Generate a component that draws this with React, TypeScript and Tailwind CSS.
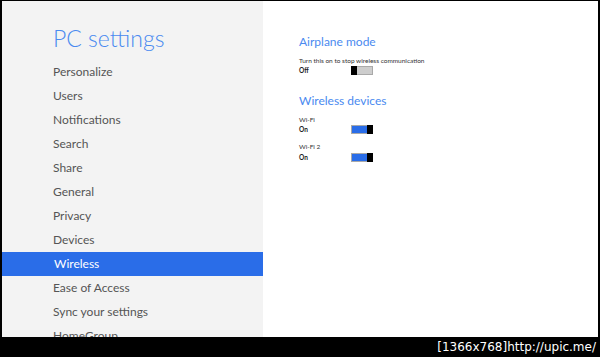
const menu = [
  "Personalize",
  "Users",
  "Notifications",
  "Search",
  "Share",
  "General",
  "Privacy",
  "Devices",
  "Wireless",
  "Ease of Access",
  "Sync your settings",
  "HomeGroup",
];

function Toggle({ on }: { on: boolean }) {
  return (
    <div className="flex h-[9px] w-[22px] border border-[#a9a9a9] bg-[#cfcfcf]">
      {on ? (
        <>
          <div className="flex-1 bg-[#2a6de8]" />
          <div className="w-[6px] -my-[1px] -mr-[1px] bg-black" />
        </>
      ) : (
        <>
          <div className="w-[6px] -my-[1px] -ml-[1px] bg-black" />
          <div className="flex-1 bg-[#cdcdcd]" />
        </>
      )}
    </div>
  );
}

function Row({ label, on }: { label: string; on: boolean }) {
  return (
    <div className="flex items-center h-[9px]">
      <span className="w-[52px] text-[6.5px] font-bold text-[#222] leading-[9px]">{label}</span>
      <Toggle on={on} />
    </div>
  );
}

export default function App() {
  return (
    <div className="w-[600px] h-[357px] bg-black flex flex-col overflow-hidden font-['Lato',sans-serif]">
      <div className="flex flex-1 min-h-0 pt-[1px] px-[2px] overflow-hidden">
        {/* Left nav */}
        <div className="w-[261px] bg-[#f3f3f3] flex flex-col overflow-hidden">
          <h1 className="pl-[51px] pt-[22px] text-[23px] leading-[30px] font-light text-[#4a8af0]">
            PC settings
          </h1>
          <ul className="mt-[7px] flex flex-col">
            {menu.map((m) => (
              <li
                key={m}
                className={
                  m === "Wireless"
                    ? "h-[24px] leading-[24px] pl-[52px] text-[12px] text-white bg-[#2a6de8]"
                    : "h-[24px] leading-[24px] pl-[51px] text-[12px] text-[#555]"
                }
              >
                {m}
              </li>
            ))}
          </ul>
        </div>

        {/* Right content */}
        <div className="flex-1 bg-white pl-[36px] pt-[33px] flex flex-col">
          <h2 className="text-[12px] leading-[16px] text-[#4a8af0]">Airplane mode</h2>
          <p className="mt-[6px] text-[6.5px] leading-[9px] text-[#333]">
            Turn this on to stop wireless communication
          </p>
          <div className="mt-[1px]">
            <Row label="Off" on={false} />
          </div>

          <h2 className="mt-[18px] text-[12px] leading-[16px] text-[#4a8af0]">Wireless devices</h2>
          <p className="mt-[6px] text-[6.5px] leading-[9px] text-[#333]">Wi-Fi</p>
          <div className="mt-[1px]">
            <Row label="On" on={true} />
          </div>
          <p className="mt-[8px] text-[6.5px] leading-[9px] text-[#333]">Wi-Fi 2</p>
          <div className="mt-[2px]">
            <Row label="On" on={true} />
          </div>
        </div>
      </div>

      {/* Bottom bar */}
      <div className="h-[20px] flex items-center justify-end pr-[4px] text-white text-[12px] font-['DejaVu_Sans',sans-serif]">
        [1366x768]http://upic.me/
      </div>
    </div>
  );
}
